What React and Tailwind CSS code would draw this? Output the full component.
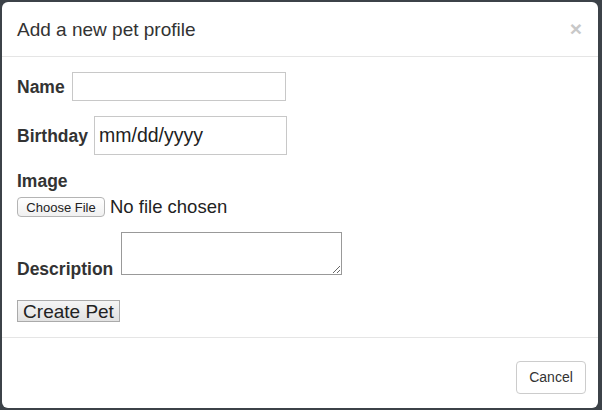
import React from 'react';

export default function App() {
    return (
        <div className="w-[602px] h-[410px] bg-[#3c4248] pl-[2px] pt-[2px] font-['Liberation_Sans',Arial,sans-serif] text-[#333]">
            <div className="w-[596px] h-[406px] bg-white rounded-[6px] flex flex-col overflow-hidden">
                {/* Header */}
                <div className="h-[55px] shrink-0 border-b border-[#e5e5e5] flex items-center justify-between pl-[15px] pr-[15px]">
                    <h4 className="text-[19px] leading-none pt-[1px]">Add a new pet profile</h4>
                    <button className="text-[21px] font-bold leading-none text-[#c8c8c8] -mt-[2px] mr-[1px]">×</button>
                </div>

                {/* Body */}
                <div className="h-[281px] shrink-0 border-b border-[#e5e5e5] px-[15px] pt-[15px] text-[17.5px]">
                    <div className="flex items-center h-[29px]">
                        <label className="font-bold mr-[7px] pt-[1px]">Name</label>
                        <input type="text" className="w-[214px] h-[29px] border border-[#c8c8c8] outline-none" />
                    </div>

                    <div className="flex items-center h-[39px] mt-[15px]">
                        <label className="font-bold mr-[6px] pt-[2px]">Birthday</label>
                        <div className="w-[193px] h-[39px] border border-[#c8c8c8] flex items-center pl-[4px] text-[19.5px] text-[#222]">mm/dd/yyyy</div>
                    </div>

                    <div className="mt-[16px]">
                        <label className="block font-bold leading-[20px]">Image</label>
                        <div className="flex items-center h-[20px] mt-[6px]">
                            <button className="h-[20px] w-[88px] rounded-[4px] border border-[#b4b4b4] bg-gradient-to-b from-white to-[#f0f0f0] text-[13px] leading-none text-[#222]">Choose File</button>
                            <span className="ml-[5px] text-[18.5px] leading-none text-[#222]">No file chosen</span>
                        </div>
                    </div>

                    <div className="flex items-end mt-[15px]">
                        <label className="font-bold mr-[8px] leading-none -mb-[3px]">Description</label>
                        <textarea className="block w-[221px] h-[43px] border border-[#999] outline-none"></textarea>
                    </div>

                    <button className="mt-[25px] w-[103px] h-[22px] border border-[#aaa] bg-gradient-to-b from-[#f5f5f5] to-[#e2e2e2] text-[19px] leading-none text-[#222]">Create Pet</button>
                </div>

                {/* Footer */}
                <div className="flex justify-end pt-[23px] pr-[12px]">
                    <button className="w-[70px] h-[33px] rounded-[4px] border border-[#ccc] bg-white text-[14px] text-[#333]">Cancel</button>
                </div>
            </div>
        </div>
    );
}
